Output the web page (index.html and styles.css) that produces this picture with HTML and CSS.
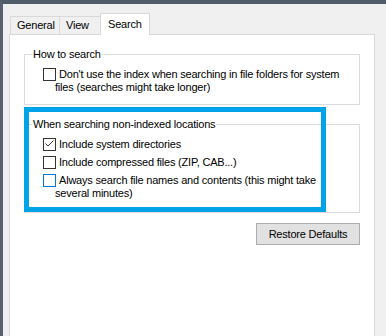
FILE: index.html
```html
<!DOCTYPE html>
<html lang="en">
<head>
    <meta charset="UTF-8">
    <meta name="viewport" content="width=device-width, initial-scale=1.0">
    <title>Folder Options - Search</title>
    <link rel="stylesheet" href="styles.css">
</head>

<body>
    <div class="frame">
        <div class="dialog">
            <div class="tabs">
                <div class="tab tab-first">General</div>
                <div class="tab">View</div>
                <div class="tab tab-active">Search</div>
            </div>

            <div class="panel">
                <fieldset class="group group-first">
                    <legend>How to search</legend>
                    <label class="option hang">
                        <span class="box"></span>
                        <span class="option-text">Don't use the index when searching in file folders for system<br>files (searches might take longer)</span>
                    </label>
                </fieldset>

                <div class="highlight-wrap">
                    <fieldset class="group">
                        <legend>When searching non-indexed locations</legend>
                        <label class="option">
                            <span class="box checked">
                                <svg width="11" height="11" viewBox="0 0 11 11"><polyline points="1.5,4.5 4,7 9.5,1.5" fill="none" stroke="#333" stroke-width="1"/></svg>
                            </span>
                            <span class="option-text">Include system directories</span>
                        </label>
                        <label class="option">
                            <span class="box"></span>
                            <span class="option-text">Include compressed files (ZIP, CAB...)</span>
                        </label>
                        <label class="option hang">
                            <span class="box hover"></span>
                            <span class="option-text">Always search file names and contents (this might take<br>several minutes)</span>
                        </label>
                    </fieldset>
                    <!-- marcação azul por cima do grupo -->
                    <div class="highlight"></div>
                </div>

                <div class="actions">
                    <button class="btn">Restore Defaults</button>
                </div>
            </div>
        </div>
    </div>
</body>
</html>
```

FILE: styles.css
```css
body {
    margin: 0;
    background-color: #f0f0f0;
    font-family: "Liberation Sans", Arial, sans-serif;
    font-size: 11px;
    letter-spacing: -0.2px;
    line-height: 13px;
    color: #000;
    overflow: hidden;
}
.frame {
    border-top: 4px solid #515c6b;
    border-left: 3px solid #58616f;
    height: 332px;
}
.dialog {
    padding: 9px 11px 0 6px;
}
.tabs {
    display: flex;
    align-items: flex-end;
    height: 21px;
    padding-left: 1px;
}
.tab {
    height: 18px;
    box-sizing: border-box;
    border-top: 1px solid #d9d9d9;
    border-right: 1px solid #d9d9d9;
    background-color: #f0f0f0;
    padding: 2px 0 0 6px;
    width: 41px;
}
.tab-first {
    border-left: 1px solid #d9d9d9;
    width: 50px;
}
.tab-active {
    position: relative;
    z-index: 1;
    height: 22px;
    margin-bottom: -1px;
    margin-left: -1px;
    width: 50px;
    padding: 4px 0 0 7px;
    border-left: 1px solid #d9d9d9;
    background-color: #fff;
}
.panel {
    box-sizing: border-box;
    background-color: #fff;
    border: 1px solid #d9d9d9;
    border-bottom: none;
    height: 302px;
    padding: 13px 14px 0 14px;
}
.group {
    margin: 0;
    min-width: 0;
    border: 1px solid #dcdcdc;
    padding: 7px 8px 10px 7px;
    display: flex;
    flex-direction: column;
    gap: 5px;
}
.group legend {
    padding: 0 1px;
}
.highlight-wrap {
    position: relative;
    margin-top: 13px;
}
.highlight-wrap .group {
    padding-bottom: 12px;
}
.highlight {
    position: absolute;
    left: 0;
    top: -11px;
    width: 302px;
    height: 105px;
    box-sizing: border-box;
    border: 5px solid #00a2e8;
}
.option {
    display: flex;
    align-items: flex-start;
    margin-left: 11px;
    white-space: nowrap;
}
.box {
    width: 13px;
    height: 13px;
    box-sizing: border-box;
    border: 1px solid #333;
    background-color: #fff;
    flex-shrink: 0;
}
.box svg {
    display: block;
}
.box.hover {
    border-color: #0078d7;
}
.option-text {
    padding-left: 3px;
}
.option.hang .option-text {
    padding-left: 0;
    margin-left: -1px;
    text-indent: 4px;
}
.actions {
    display: flex;
    justify-content: flex-end;
    margin-top: 10px;
}
.btn {
    width: 104px;
    height: 22px;
    padding: 0;
    background-color: #e1e1e1;
    border: 1px solid #adadad;
    font-family: inherit;
    font-size: 11px;
    letter-spacing: -0.2px;
    color: #000;
}
```
